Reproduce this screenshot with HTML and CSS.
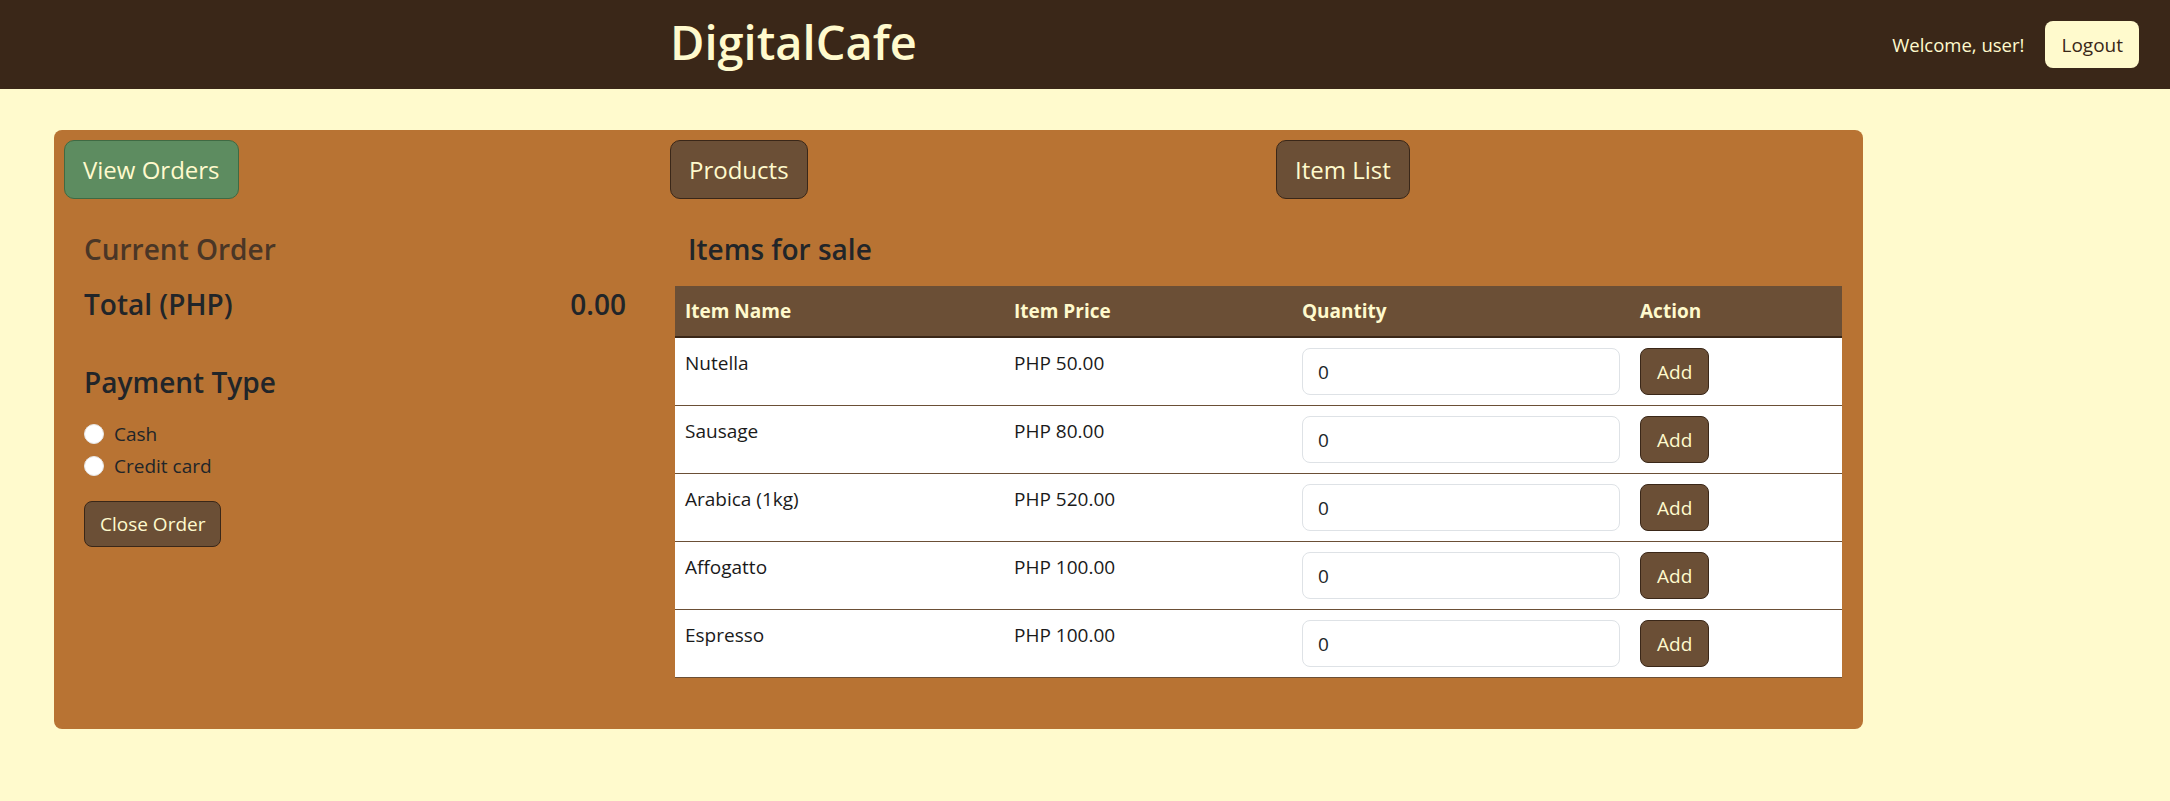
FILE: index.html
```html
<!DOCTYPE html>
<html lang="en">
<head>
<meta charset="utf-8">
<title>DigitalCafe</title>
<link rel="stylesheet" href="styles.css">
</head>
<body>
<header class="navbar">
  <div class="nav-spacer"></div>
  <h1 class="brand">DigitalCafe</h1>
  <div class="nav-user">
    <span class="welcome">Welcome, user!</span>
    <button class="btn-logout" type="button">Logout</button>
  </div>
</header>
<main class="page">
  <section class="card">
    <div class="card-grid">
      <div class="tab-cell"><button class="btn-tab btn-green" type="button">View Orders</button></div>
      <div class="tab-cell"><button class="btn-tab btn-brown" type="button">Products</button></div>
      <div class="tab-cell"><button class="btn-tab btn-brown" type="button">Item List</button></div>

      <div class="order">
        <h3 class="heading order-title">Current Order</h3>
        <div class="total-row">
          <h3 class="heading">Total (PHP)</h3>
          <h3 class="heading">0.00</h3>
        </div>
        <h3 class="heading pay-title">Payment Type</h3>
        <div class="radios">
          <label class="radio-row"><input class="radio" type="radio" name="pay"> Cash</label>
          <label class="radio-row"><input class="radio" type="radio" name="pay"> Credit card</label>
        </div>
        <button class="btn-close" type="button">Close Order</button>
      </div>

      <div class="sale">
        <h3 class="heading sale-title">Items for sale</h3>
        <table class="items">
          <colgroup>
            <col class="c-name"><col class="c-price"><col class="c-qty"><col class="c-act">
          </colgroup>
          <thead>
            <tr><th>Item Name</th><th>Item Price</th><th>Quantity</th><th>Action</th></tr>
          </thead>
          <tbody>
            <tr><td>Nutella</td><td>PHP 50.00</td><td><input class="qty" type="text" value="0"></td><td><button class="btn-add" type="button">Add</button></td></tr>
            <tr><td>Sausage</td><td>PHP 80.00</td><td><input class="qty" type="text" value="0"></td><td><button class="btn-add" type="button">Add</button></td></tr>
            <tr><td>Arabica (1kg)</td><td>PHP 520.00</td><td><input class="qty" type="text" value="0"></td><td><button class="btn-add" type="button">Add</button></td></tr>
            <tr><td>Affogatto</td><td>PHP 100.00</td><td><input class="qty" type="text" value="0"></td><td><button class="btn-add" type="button">Add</button></td></tr>
            <tr><td>Espresso</td><td>PHP 100.00</td><td><input class="qty" type="text" value="0"></td><td><button class="btn-add" type="button">Add</button></td></tr>
          </tbody>
        </table>
      </div>
    </div>
  </section>
</main>
</body>
</html>
```
FILE: styles.css
```css
* { box-sizing: border-box; }

body {
  margin: 0;
  background: #fffacd;
  font-family: "Open Sans", "Noto Sans", sans-serif;
  font-size: 19px;
  line-height: 30px;
  color: #212529;
}

button, input { font-family: inherit; }

.navbar {
  height: 89px;
  background: #3a2718;
  display: grid;
  grid-template-columns: 614px 1fr auto;
  align-items: center;
  padding: 0 31px 0 56px;
}

.brand {
  margin: 0 0 6px;
  font-size: 47px;
  font-weight: 600;
  line-height: 58px;
  color: #fffacd;
}

.nav-user {
  display: flex;
  align-items: center;
  gap: 21px;
}

.welcome {
  color: #fffacd;
  font-size: 18.5px;
}

.btn-logout {
  background: #fffacd;
  color: #3a2718;
  border: 0;
  border-radius: 8px;
  padding: 8.5px 16px;
  font-size: 19px;
  line-height: 30px;
}

.page {
  padding: 41px 0 0 54px;
}

.card {
  width: 1809px;
  background: #b87333;
  border-radius: 8px;
  padding: 10px 10px 51px;
}

.card-grid {
  display: grid;
  grid-template-columns: 606px 606px 1fr;
  row-gap: 33px;
}

.btn-tab {
  font-size: 24px;
  line-height: 36px;
  padding: 10.5px 18px;
  border-radius: 10px;
  color: #fffacd;
}

.btn-green {
  background: #5d8c60;
  border: 1px solid #3f6a43;
}

.btn-brown {
  background: #6b4f36;
  border: 1px solid #3a2718;
}

.order {
  padding: 0 44px 0 20px;
}

.heading {
  margin: 0;
  font-size: 28px;
  font-weight: 600;
  line-height: 34px;
  color: #212529;
}

.order-title { color: #4a3626; }

.total-row {
  display: flex;
  justify-content: space-between;
  margin-top: 21px;
}

.pay-title { margin-top: 44px; }

.radios {
  margin-top: 20px;
  display: flex;
  flex-direction: column;
  gap: 2px;
}

.radio-row {
  display: flex;
  align-items: center;
  height: 30px;
}

.radio {
  appearance: none;
  -webkit-appearance: none;
  width: 20px;
  height: 20px;
  margin: 0 10px 0 0;
  border-radius: 50%;
  background: #fff;
  border: 1px solid #e6e6e6;
}

.btn-close {
  margin-top: 20px;
  padding: 7px 15px;
  border: 1px solid #3a2718;
  border-radius: 8px;
  background: #6b4f36;
  color: #fffacd;
  font-size: 19px;
  line-height: 30px;
}

.sale {
  grid-column: 2 / 4;
  padding-left: 5px;
}

.sale-title {
  margin: 0 0 20px 13px;
}

.items {
  width: 1167px;
  border-collapse: collapse;
  table-layout: fixed;
  background: #fff;
}

.c-name { width: 329px; }
.c-price { width: 288px; }
.c-qty { width: 338px; }
.c-act { width: 212px; }

.items th {
  background: #6b4f36;
  color: #fffacd;
  font-weight: 700;
  text-align: left;
  padding: 10px;
  border-bottom: 2px solid #3a2718;
}

.items td {
  padding: 10px;
  vertical-align: top;
  border-bottom: 1px solid #6b4f36;
  color: #1a1a1a;
}

.qty {
  display: block;
  width: 100%;
  height: 47px;
  border: 1px solid #dee2e6;
  border-radius: 8px;
  padding: 0 15px;
  font-size: 19px;
  color: #212529;
  background: #fff;
}

.btn-add {
  display: block;
  height: 47px;
  padding: 0 16px;
  background: #6b4f36;
  color: #fffacd;
  border: 1px solid #3a2718;
  border-radius: 8px;
  font-size: 19px;
  line-height: 30px;
}
```
